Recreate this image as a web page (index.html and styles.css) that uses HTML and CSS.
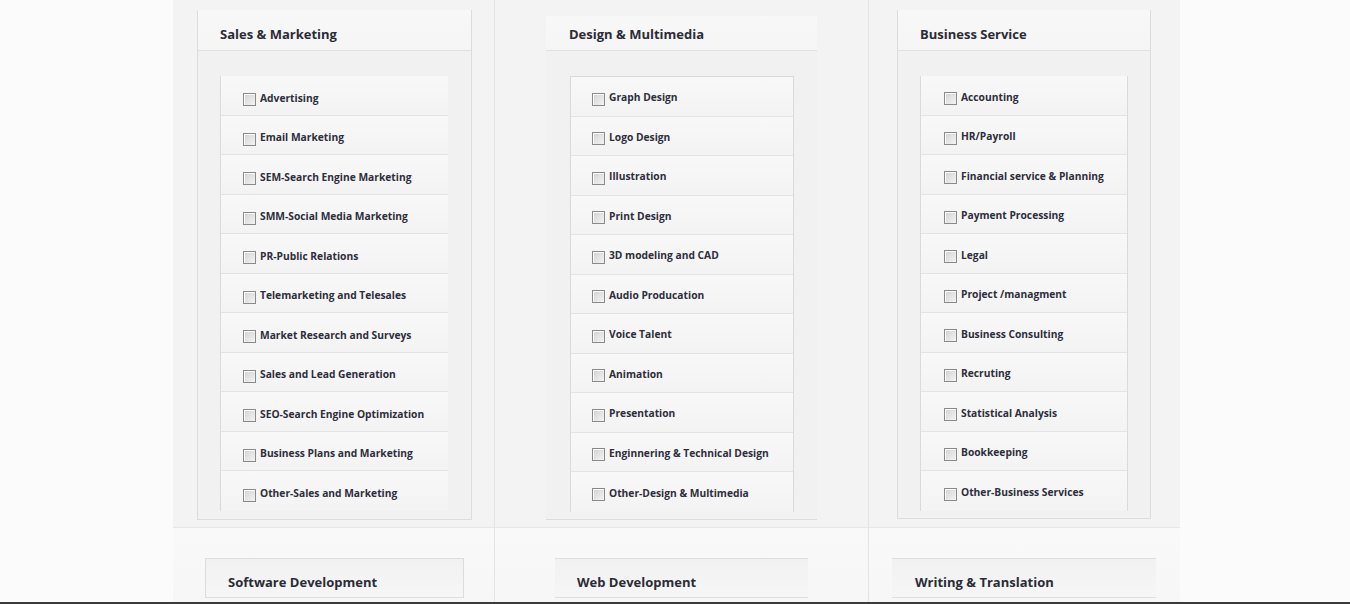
FILE: index.html
```html
<!DOCTYPE html>
<html lang="en">
<head>
  <meta charset="UTF-8">
  <title>Categories</title>
  <meta name="viewport" content="width=device-width, initial-scale=1.0">
  <link rel="stylesheet" href="styles.css">
</head>
<body>

  <div class="categorie">

    <div class="cella cella-1">
      <div class="pannello pannello-a">
        <h2 class="titolo">Sales &amp; Marketing</h2>
        <ul class="lista lista-a">
          <li><label><input type="checkbox"> Advertising</label></li>
          <li><label><input type="checkbox"> Email Marketing</label></li>
          <li><label><input type="checkbox"> SEM-Search Engine Marketing</label></li>
          <li><label><input type="checkbox"> SMM-Social Media Marketing</label></li>
          <li><label><input type="checkbox"> PR-Public Relations</label></li>
          <li><label><input type="checkbox"> Telemarketing and Telesales</label></li>
          <li><label><input type="checkbox"> Market Research and Surveys</label></li>
          <li><label><input type="checkbox"> Sales and Lead Generation</label></li>
          <li><label><input type="checkbox"> SEO-Search Engine Optimization</label></li>
          <li><label><input type="checkbox"> Business Plans and Marketing</label></li>
          <li><label><input type="checkbox"> Other-Sales and Marketing</label></li>
        </ul>
      </div>
    </div>

    <div class="cella cella-2">
      <div class="pannello pannello-b">
        <h2 class="titolo">Design &amp; Multimedia</h2>
        <ul class="lista lista-b">
          <li><label><input type="checkbox"> Graph Design</label></li>
          <li><label><input type="checkbox"> Logo Design</label></li>
          <li><label><input type="checkbox"> Illustration</label></li>
          <li><label><input type="checkbox"> Print Design</label></li>
          <li><label><input type="checkbox"> 3D modeling and CAD</label></li>
          <li><label><input type="checkbox"> Audio Producation</label></li>
          <li><label><input type="checkbox"> Voice Talent</label></li>
          <li><label><input type="checkbox"> Animation</label></li>
          <li><label><input type="checkbox"> Presentation</label></li>
          <li><label><input type="checkbox"> Enginnering &amp; Technical Design</label></li>
          <li><label><input type="checkbox"> Other-Design &amp; Multimedia</label></li>
        </ul>
      </div>
    </div>

    <div class="cella cella-3">
      <div class="pannello pannello-c">
        <h2 class="titolo">Business Service</h2>
        <ul class="lista lista-c">
          <li><label><input type="checkbox"> Accounting</label></li>
          <li><label><input type="checkbox"> HR/Payroll</label></li>
          <li><label><input type="checkbox"> Financial service &amp; Planning</label></li>
          <li><label><input type="checkbox"> Payment Processing</label></li>
          <li><label><input type="checkbox"> Legal</label></li>
          <li><label><input type="checkbox"> Project /managment</label></li>
          <li><label><input type="checkbox"> Business Consulting</label></li>
          <li><label><input type="checkbox"> Recruting</label></li>
          <li><label><input type="checkbox"> Statistical Analysis</label></li>
          <li><label><input type="checkbox"> Bookkeeping</label></li>
          <li><label><input type="checkbox"> Other-Business Services</label></li>
        </ul>
      </div>
    </div>

    <div class="cella cella-1 riga-2">
      <div class="pannello pannello-d">
        <h2 class="titolo">Software Development</h2>
      </div>
    </div>

    <div class="cella cella-2 riga-2">
      <div class="pannello pannello-e">
        <h2 class="titolo">Web Development</h2>
      </div>
    </div>

    <div class="cella cella-3 riga-2">
      <div class="pannello pannello-f">
        <h2 class="titolo">Writing &amp; Translation</h2>
      </div>
    </div>

  </div>

  <div class="barra-fondo"></div>

</body>
</html>
```

FILE: styles.css
```css
    body {
      font-family: "Open Sans", Arial, sans-serif;
      background-color: #fbfbfb;
      margin: 0;
      padding: 0;
      color: #2e2e3a;
    }

    .categorie {
      display: grid;
      grid-template-columns: 322px 374px 311px;
      grid-template-rows: 528px 90px;
      margin-left: 173px;
      width: 1007px;
      background-color: #f3f3f3;
    }

    .cella {
      border-right: 1px solid #e4e4e4;
      border-bottom: 1px solid #e6e6e6;
      box-sizing: border-box;
    }

    .cella-3 {
      border-right: none;
    }

    .riga-2 {
      border-bottom: none;
      background: linear-gradient(#f9f9f9, #f6f6f6);
    }

    .cella-1 { padding: 10px 0 0 24px; }
    .cella-2 { padding: 16px 0 0 51px; }
    .cella-3 { padding: 10px 0 0 28px; }

    .riga-2.cella-1 { padding: 30px 0 0 32px; }
    .riga-2.cella-2 { padding: 30px 0 0 60px; }
    .riga-2.cella-3 { padding: 30px 0 0 23px; }

    .pannello {
      box-sizing: border-box;
      border: 1px solid #dcdcdc;
      border-top: none;
      background-color: #f1f1f1;
      padding-bottom: 8px;
    }

    .pannello-a { width: 275px; height: 510px; }
    .pannello-b { width: 271px; height: 504px; border-left: none; border-right: none; }
    .pannello-c { width: 254px; height: 509px; }

    .pannello-d, .pannello-e, .pannello-f {
      border-top: 1px solid #dedede;
      border-bottom: none;
      padding-bottom: 0;
    }

    .pannello-d { width: 259px; }
    .pannello-e { width: 253px; border-left: none; border-right: none; }
    .pannello-f { width: 264px; border-left: none; border-right: none; }

    .titolo {
      margin: 0;
      height: 40px;
      line-height: 48px;
      padding-left: 22px;
      font-size: 13px;
      font-weight: bold;
      color: #2b2b36;
      background: linear-gradient(#f8f8f8, #f5f5f5);
      border-bottom: 1px solid #e0e0e0;
    }

    .pannello-b .titolo {
      padding-left: 23px;
      height: 34px;
      line-height: 36px;
    }

    .pannello-d .titolo, .pannello-e .titolo, .pannello-f .titolo {
      height: 38px;
      line-height: 46px;
      background: linear-gradient(#f1f1f1, #f6f6f6);
    }

    .pannello-f .titolo {
      padding-left: 23px;
    }

    .lista {
      list-style: none;
      margin: 25px 0 0 22px;
      padding: 0;
      border-left: 1px solid #dadada;
      box-sizing: border-box;
    }

    .lista-a { width: 228px; }
    .lista-b { width: 224px; margin-left: 24px; border: 1px solid #dadada; border-bottom: none; }
    .lista-c { width: 208px; border-right: 1px solid #dadada; }

    .lista li {
      height: 39.5px;
      box-sizing: border-box;
      border-bottom: 1px solid #e3e3e3;
      background: linear-gradient(#f8f8f8, #f3f3f3);
      padding-left: 22px;
      display: flex;
      align-items: center;
    }

    .lista-b li {
      padding-left: 21px;
    }

    .lista-c li {
      padding-left: 23px;
    }

    .lista li:last-child {
      border-bottom: none;
    }

    .lista label {
      display: flex;
      align-items: center;
      font-size: 10.25px;
      font-weight: bold;
      color: #2e2e3c;
      cursor: pointer;
      margin-top: 5px;
    }

    .lista-b label {
      margin-top: 2px;
    }

    .lista-c label {
      margin-top: 3px;
    }

    .lista input[type="checkbox"] {
      appearance: none;
      -webkit-appearance: none;
      width: 13px;
      height: 13px;
      margin: 4px 4px 0 0;
      border: 1px solid #8a8a8a;
      background: linear-gradient(135deg, #d2d2d2, #f4f4f4);
      box-shadow: inset 1px 1px 0 #ffffff;
      box-sizing: border-box;
    }

    .barra-fondo {
      position: fixed;
      left: 0;
      right: 0;
      bottom: 0;
      height: 2px;
      background-color: #3a3a3a;
    }
```
